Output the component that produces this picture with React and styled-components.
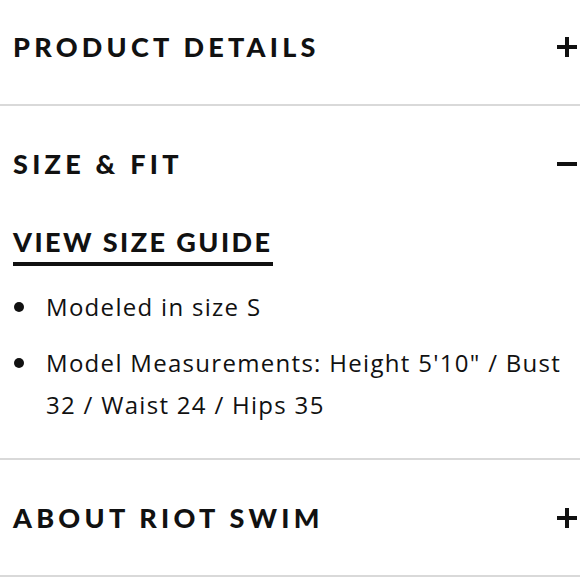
import React from 'react';
import styled, { createGlobalStyle } from 'styled-components';

const Global = createGlobalStyle`
  body {
    margin: 0;
    background: #fff;
    color: #111;
  }
`;

const Page = styled.div`
  width: 580px;
  height: 580px;
  overflow: hidden;
`;

const List = styled.div`
  margin-top: -11px;
`;

const Section = styled.section`
  border-bottom: 2px solid #d9d9d9;
`;

const Header = styled.div`
  height: 115px;
  display: flex;
  align-items: center;
  justify-content: space-between;
  padding: 0 3px 0 13px;
`;

const Title = styled.h2`
  margin: 0;
  font-family: "Lato", "Liberation Sans", sans-serif;
  font-weight: 900;
  font-size: 27px;
  letter-spacing: 4.25px;
  color: #111;
`;

const Toggle = styled.svg`
  width: 20px;
  height: 20px;
  display: block;
`;

const Icon = ({ open }) => (
  <Toggle viewBox="0 0 20 20">
    <rect x="0" y="8" width="20" height="4" fill="#111" />
    {!open && <rect x="8" y="0" width="4" height="20" fill="#111" />}
  </Toggle>
);

const Body = styled.div`
  padding: 0 13px 18px 13px;
`;

const GuideLink = styled.a`
  display: inline-block;
  font-family: "Lato", "Liberation Sans", sans-serif;
  font-weight: 900;
  font-size: 27px;
  letter-spacing: 2.45px;
  color: #111;
  text-decoration: none;
  border-bottom: 4px solid #111;
  line-height: 30px;
  padding-bottom: 5px;
  margin-top: 6px;
`;

const Bullets = styled.ul`
  margin: 20px 0 0 0;
  padding: 0;
  list-style: none;
`;

const Bullet = styled.li`
  position: relative;
  padding-left: 33px;
  font-family: "Open Sans", "Noto Sans", sans-serif;
  font-size: 24px;
  letter-spacing: 1.3px;
  line-height: 42px;
  color: #111;
  margin-bottom: 14px;
  &::before {
    content: "";
    position: absolute;
    left: 1px;
    top: 16px;
    width: 10px;
    height: 10px;
    border-radius: 50%;
    background: #111;
  }
`;

const Accordion = ({ title, open, children }) => (
  <Section>
    <Header>
      <Title>{title}</Title>
      <Icon open={open} />
    </Header>
    {open && <Body>{children}</Body>}
  </Section>
);

export default function App() {
  return (
    <Page>
      <Global />
      <List>
        <Accordion title="PRODUCT DETAILS" />
        <Accordion title="SIZE & FIT" open>
          <GuideLink href="#">VIEW SIZE GUIDE</GuideLink>
          <Bullets>
            <Bullet>Modeled in size S</Bullet>
            <Bullet>Model Measurements: Height 5'10" / Bust 32 / Waist 24 / Hips 35</Bullet>
          </Bullets>
        </Accordion>
        <Accordion title="ABOUT RIOT SWIM" />
      </List>
    </Page>
  );
}
